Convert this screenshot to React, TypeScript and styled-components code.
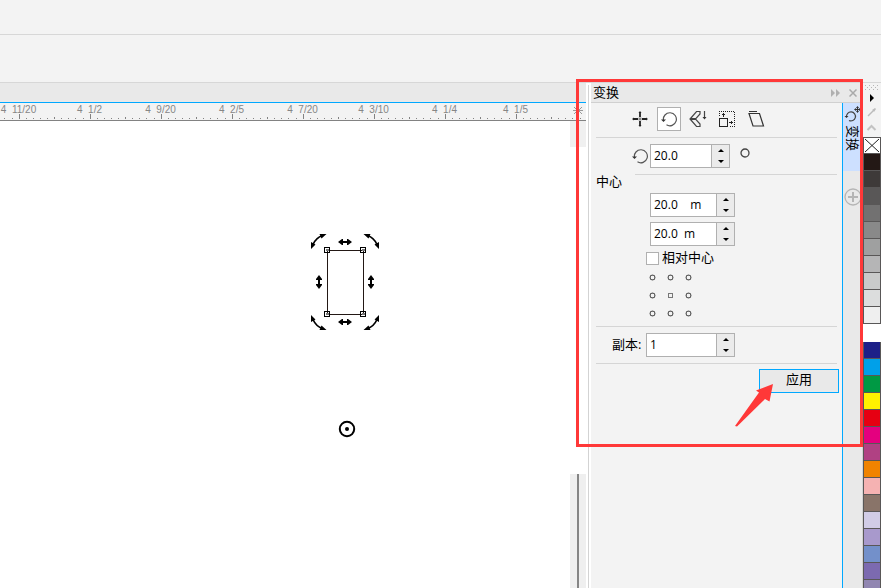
import React, { useState } from "react";
import styled, { createGlobalStyle } from "styled-components";

const Global = createGlobalStyle`
  * { box-sizing: border-box; }
  body {
    margin: 0;
    background: #fff;
    color: #000;
    font: 12px/16px "Open Sans", "Noto Sans CJK SC", sans-serif;
  }
  button, input { font: inherit; color: inherit; margin: 0; }
`;

const Shell = styled.div`
  position: relative;
  display: flex;
  flex-direction: column;
  height: 100vh;
  overflow: hidden;
`;

const TopBar = styled.header<{ $height: number }>`
  flex: none;
  height: ${(p) => p.$height}px;
  background: #f3f3f3;
  border-bottom: 1px solid #d7d7d7;
`;

const Workspace = styled.main`
  flex: 1;
  display: flex;
  min-height: 0;
`;

const Document = styled.section`
  flex: 1;
  min-width: 0;
  display: flex;
  flex-direction: column;
`;

const TabBand = styled.div`
  flex: none;
  height: 20px;
  background: #e9e9e9;
  border-bottom: 1px solid #00a8ff;
`;

const Ruler = styled.div`
  position: relative;
  flex: none;
  display: flex;
  height: 18px;
  background: #f3f3f3;
  border-bottom: 1px solid #828282;
  overflow: hidden;
`;

const RulerCell = styled.div`
  flex: none;
  width: 71px;
  display: flex;
  flex-direction: column;
  align-items: center;
  color: #868686;
  font: 10px/14px "Liberation Sans", Arial, sans-serif;
  white-space: pre;

  &:first-child { margin-left: -17px; }
  span { height: 11px; }
  svg { flex: none; display: block; margin-top: -1px; }
`;

const RulerEnd = styled.svg`
  position: absolute;
  right: 2px;
  top: 2px;
`;

const Canvas = styled.div`
  position: relative;
  flex: 1;
  min-height: 0;
  display: flex;
  justify-content: flex-end;
  background: #fff;
`;

const Drawing = styled.svg`
  position: absolute;
  left: 300px;
  top: 104px;
`;

const ScrollColumn = styled.div`
  width: 16px;
  display: flex;
  flex-direction: column;
  justify-content: flex-start;
`;

const ScrollTop = styled.div`
  height: 26px;
  background: #f0f0f0;
  margin-bottom: 327px;
`;

const ScrollTrack = styled.div`
  flex: 1;
  display: flex;
  justify-content: center;
  background: #efefef;
  &::before { content: ""; width: 2px; background: #858585; }
`;

const Splitter = styled.div`
  flex: none;
  width: 5px;
  display: flex;
  justify-content: center;
  padding-top: 2px;
  background: #fff;
  &::before { content: ""; width: 1px; background: #d3d3d3; }
`;

const Docker = styled.aside`
  flex: none;
  width: 272px;
  display: flex;
  flex-direction: column;
`;

const DockerHeader = styled.div`
  flex: none;
  height: 20px;
  display: flex;
  align-items: center;
  padding: 0 2px;
  background: #e9e9e9;
  border-bottom: 1px solid #d0d0d0;
`;

const DockerTitle = styled.h2`
  flex: 1;
  margin: 0;
  padding-bottom: 2px;
  font-size: 13px;
  line-height: 16px;
  font-weight: 400;
`;

const PlainButton = styled.button`
  display: flex;
  align-items: center;
  justify-content: center;
  padding: 0;
  border: 0;
  background: none;
`;

const HeaderButton = styled(PlainButton)`
  width: 17px;
  height: 17px;
`;

const DockerBody = styled.div`
  flex: 1;
  display: flex;
  min-height: 0;
`;

const Form = styled.form`
  flex: 1;
  min-width: 0;
  display: flex;
  flex-direction: column;
  padding: 0 5px;
  background: #f3f3f3;
  border-right: 1px solid #00a8ff;
`;

const ModeBar = styled.div`
  display: flex;
  align-items: center;
  gap: 5px;
  height: 34px;
  padding: 0 0 2px 32px;
`;

const ModeButton = styled(PlainButton)<{ $active?: boolean }>`
  width: 24px;
  height: 24px;
  border: 1px solid ${(p) => (p.$active ? "#b0b0b0" : "transparent")};
  background: ${(p) => (p.$active ? "#fff" : "none")};
`;

const Rule = styled.hr<{ $indent?: boolean }>`
  flex: none;
  width: auto;
  height: 1px;
  margin: 0 0 0 ${(p) => (p.$indent ? 39 : 0)}px;
  border: 0;
  background: #d5d5d5;
`;

const Row = styled.div<{ $indent: number; $height: number }>`
  flex: none;
  display: flex;
  align-items: center;
  height: ${(p) => p.$height}px;
  padding-left: ${(p) => p.$indent}px;
`;

const RowIcon = styled.span`
  flex: none;
  display: flex;
  margin-right: 1px;
`;

const Origin = styled(PlainButton)`
  width: 12px;
  height: 12px;
  margin: 0 0 6px 9px;
`;

const SpinBox = styled.div<{ $width: number }>`
  display: flex;
  width: ${(p) => p.$width}px;
  height: 24px;
  border: 1px solid #b0b0b0;
  background: #fff;

  input {
    flex: 1;
    min-width: 0;
    padding: 0 3px;
    border: 0;
    outline: 0;
    background: none;
  }
`;

const SpinButtons = styled.div`
  width: 18px;
  display: flex;
  flex-direction: column;
  border-left: 1px solid #b0b0b0;
  background: #ebebeb;
  button { flex: 1; }
`;

const Group = styled.fieldset`
  min-width: 0;
  margin: 0;
  padding: 0;
  border: 0;
`;

const GroupTitle = styled.legend`
  float: left;
  padding: 0;
  width: 100%;
  height: 15px;
  font-size: 13px;
  line-height: 12px;
`;

const CheckLabel = styled.label`
  display: flex;
  align-items: center;
  gap: 3px;
  font-size: 13px;

  input {
    appearance: none;
    width: 13px;
    height: 13px;
    border: 1px solid #b0b0b0;
    background: #fff;
  }
  input:checked { background: #00a8ff; }
  span { padding-bottom: 2px; }
`;

const AnchorGrid = styled.div`
  display: grid;
  grid-template-columns: repeat(3, 18px);
  grid-auto-rows: 18px;
  padding: 0 0 4px 47px;
`;

const CopiesLabel = styled.label`
  width: 34px;
  padding-bottom: 2px;
  font-size: 13px;
`;

const Apply = styled.button`
  align-self: flex-end;
  flex: none;
  width: 80px;
  height: 24px;
  margin: 5px -2px 0 0;
  padding: 0 0 4px;
  border: 1px solid #00a8ff;
  background: #e9e9e9;
  font-size: 13px;
  line-height: 18px;
`;

const TabStrip = styled.nav`
  flex: none;
  width: 20px;
  display: flex;
  flex-direction: column;
  gap: 17px;
  background: #e9e9e9;
  border-right: 1px solid #d3d3d3;
`;

const SideTab = styled(PlainButton)`
  flex-direction: column;
  justify-content: flex-start;
  height: 68px;
  padding-top: 2px;
  gap: 2px;
  background: #cde0ff;

  span {
    writing-mode: vertical-rl;
    text-orientation: sideways;
    font-size: 13px;
    line-height: 14px;
  }
`;

const Palette = styled.div`
  flex: none;
  width: 18px;
  display: flex;
  flex-direction: column;
  background: #f3f3f3;
`;

const PaletteTools = styled.div`
  flex: none;
  display: flex;
  flex-direction: column;
  align-items: center;
  height: 54px;
`;

const Swatch = styled.button<{ $color: string; $open?: boolean }>`
  flex: none;
  display: block;
  height: ${(p) => (p.$open ? 18 : 17)}px;
  padding: 0;
  border: solid ${(p) => (p.$open ? p.$color : "#595757")};
  border-width: 0 1px 1px;
  background: ${(p) => p.$color};
  svg { display: block; }
`;

const RedFrame = styled.div`
  position: absolute;
  top: 79px;
  right: 18px;
  width: 287px;
  height: 368px;
  border: 3px solid #ff3838;
  pointer-events: none;
`;

const RedArrow = styled.svg`
  position: absolute;
  top: 382px;
  right: 106px;
  pointer-events: none;
`;

const rulerLabels = ["4  11/20", "4  1/2", "4  9/20", "4  2/5", "4  7/20", "4  3/10", "4  1/4", "4  1/5", ""];

const swatches = [
  "#231815", "#3e3a39", "#595757", "#727171", "#898989", "#9fa0a0", "#b5b5b6",
  "#c9caca", "#dcdddd", "#efefef", "#ffffff", "#1d2088", "#00a0e9", "#009944",
  "#fff100", "#e60012", "#e4007f", "#b04183", "#f08300", "#f5b2b2", "#897469",
  "#d1cce6", "#a899cc", "#7390ca", "#7c6ab0", "#9186b1",
];

const RulerTicks = () => (
  <svg width="71" height="7" shapeRendering="crispEdges" aria-hidden="true">
    <path d="M36.5 1V6" stroke="#828282" />
    <path d="M0.5 4V6" stroke="#828282" />
    <path
      d="M7 5h1M14 5h1M21 5h1M29 5h1M43 5h1M50 5h1M57 5h1M64 5h1"
      stroke="#828282"
      transform="translate(0 .5)"
    />
  </svg>
);

const RotateIcon = () => (
  <svg width="18" height="16" viewBox="0 0 18 16" fill="none" aria-hidden="true">
    <path d="M3.500 9.500A6.500 6.500 0 1 1 6.500 13.800" stroke="#555" strokeWidth="1.200" />
    <path d="M1 8.500H6L3.500 11Z" fill="#333" />
  </svg>
);

const modes = [
  {
    name: "位置",
    icon: (
      <svg width="16" height="16" viewBox="0 0 16 16" aria-hidden="true">
        <path d="M8 1V6M8 10V15M1 8H6M10 8H15" stroke="#222" strokeWidth="1.800" />
        <path d="M6.500 2 8 0l1.500 2ZM6.500 14 8 16l1.500-2ZM2 6.500 0 8l2 1.500ZM14 6.500 16 8l-2 1.500Z" fill="#222" />
        <path d="M6.500 6.500h3v3h-3Z" fill="#888" />
      </svg>
    ),
  },
  { name: "旋转", icon: <RotateIcon /> },
  {
    name: "缩放和镜像",
    icon: (
      <svg width="18" height="18" viewBox="0 0 18 18" fill="none" stroke="#444" strokeWidth="1.200" aria-hidden="true">
        <path d="M7.500 1.500H11V4L7 8.500H1.500ZM1.500 9.500H7L11 14v2.500H7.500Z" />
        <path d="M15.500 1v7" />
        <path d="M13.500 7h4l-2 2.500Z" fill="#333" stroke="none" />
      </svg>
    ),
  },
  {
    name: "大小",
    icon: (
      <svg width="18" height="18" viewBox="0 0 18 18" fill="none" stroke="#222" shapeRendering="crispEdges" aria-hidden="true">
        <path d="M1.500 6V1.500H16.500V16.500H11" strokeDasharray="1 1" />
        <rect x="1.500" y="8.500" width="8" height="8" />
        <path d="M5.500 3v4M4 4.500h3M11 12.500h4M13.500 11v3" />
      </svg>
    ),
  },
  {
    name: "倾斜",
    icon: (
      <svg width="18" height="18" viewBox="0 0 18 18" fill="none" stroke="#333" strokeWidth="1.200" aria-hidden="true">
        <path d="M2 1.500h8M2 3.500h10.500l4 12.500H6Z" />
      </svg>
    ),
  },
];

function Spin({ id, label, value, width }: { id: string; label: string; value: string; width: number }) {
  return (
    <SpinBox $width={width}>
      <input id={id} aria-label={label} defaultValue={value} />
      <SpinButtons>
        <PlainButton type="button" aria-label="增加">
          <svg width="6" height="3"><path d="M0 3L3 0l3 3Z" /></svg>
        </PlainButton>
        <PlainButton type="button" aria-label="减少">
          <svg width="6" height="3"><path d="M0 0L3 3l3-3Z" /></svg>
        </PlainButton>
      </SpinButtons>
    </SpinBox>
  );
}

const CanvasDrawing = () => (
  <Drawing width="95" height="220" viewBox="300 225 95 220" aria-label="选定的矩形">
    <defs>
      <path id="stretch" d="M-7 0l4-3h1v2h4v-2h1l4 3-4 3H2V1h-4v2h-1Z" />
      <g id="turn">
        <path d="M313 244.500C315 240 318 237 322.500 235.500" fill="none" stroke="#000" strokeWidth="1.700" />
        <path d="M319.500 234h7l-5 4.500ZM311 242v7l4.500-4.500Z" />
      </g>
    </defs>
    <rect x="327.500" y="250.500" width="36" height="64" fill="none" stroke="#231815" />
    {[[324.5, 247.5], [360.5, 247.5], [324.5, 311.5], [360.5, 311.5]].map(([x, y]) => (
      <g key={`${x}-${y}`} fill="none" stroke="#000" shapeRendering="crispEdges">
        <rect x={x} y={y} width="5" height="5" />
        <path d={`M${x + 2} ${y + 3}h2v-1h-2Z`} strokeWidth="1" stroke="#777" />
      </g>
    ))}
    <use href="#stretch" transform="translate(345 242)" />
    <use href="#stretch" transform="translate(345 322)" />
    <use href="#stretch" transform="translate(319 282) rotate(90)" />
    <use href="#stretch" transform="translate(371 282) rotate(90)" />
    <use href="#turn" />
    <use href="#turn" transform="translate(690 0) scale(-1 1)" />
    <use href="#turn" transform="translate(0 564) scale(1 -1)" />
    <use href="#turn" transform="translate(690 564) scale(-1 -1)" />
    <circle cx="347" cy="429" r="7.200" fill="none" stroke="#000" strokeWidth="2" />
    <circle cx="347" cy="429" r="2" />
  </Drawing>
);

export default function App() {
  const [mode, setMode] = useState("旋转");

  return (
    <>
      <Global />
      <Shell>
        <TopBar $height={35} />
        <TopBar $height={48} />
        <Workspace>
          <Document>
            <TabBand />
            <Ruler>
              {rulerLabels.map((label, i) => (
                <RulerCell key={i}>
                  <span>{label}</span>
                  <RulerTicks />
                </RulerCell>
              ))}
              <RulerEnd width="12" height="11" stroke="#999" fill="none" aria-hidden="true">
                <path d="M1 5.500h10M6 1v3M6 7v2M2 2l3 3M10 2L7 5M2 9l3-3M10 9L7 6" />
              </RulerEnd>
            </Ruler>
            <Canvas>
              <CanvasDrawing />
              <ScrollColumn>
                <ScrollTop />
                <ScrollTrack />
              </ScrollColumn>
            </Canvas>
          </Document>
          <Splitter />
          <Docker>
            <DockerHeader>
              <DockerTitle>变换</DockerTitle>
              <HeaderButton type="button" aria-label="折叠">
                <svg width="9" height="8"><path d="M0 0l4 4-4 4ZM5 0l4 4-4 4Z" fill="#b0b0b0" /></svg>
              </HeaderButton>
              <HeaderButton type="button" aria-label="关闭">
                <svg width="8" height="8"><path d="M.5.5l7 7M7.500.5l-7 7" stroke="#aaa" strokeWidth="1.500" /></svg>
              </HeaderButton>
            </DockerHeader>
            <DockerBody>
              <Form onSubmit={(e) => e.preventDefault()}>
                <ModeBar>
                  {modes.map((m) => (
                    <ModeButton
                      key={m.name}
                      type="button"
                      aria-label={m.name}
                      $active={m.name === mode}
                      onClick={() => setMode(m.name)}
                    >
                      {m.icon}
                    </ModeButton>
                  ))}
                </ModeBar>
                <Rule />
                <Row $indent={35} $height={36}>
                  <RowIcon><RotateIcon /></RowIcon>
                  <Spin id="angle" label="旋转角度" value="20.0" width={80} />
                  <Origin type="button" aria-label="旋转中心">
                    <svg width="10" height="10"><circle cx="5" cy="5" r="4" fill="none" stroke="#444" strokeWidth="1.300" /></svg>
                  </Origin>
                </Row>
                <Rule $indent />
                <Group>
                  <GroupTitle>中心</GroupTitle>
                  <Row $indent={54} $height={29}>
                    <Spin id="center-x" label="中心 X" value="20.0    m" width={85} />
                  </Row>
                  <Row $indent={54} $height={29}>
                    <Spin id="center-y" label="中心 Y" value="20.0  m" width={85} />
                  </Row>
                  <Row $indent={50} $height={20}>
                    <CheckLabel>
                      <input type="checkbox" />
                      <span>相对中心</span>
                    </CheckLabel>
                  </Row>
                  <AnchorGrid>
                    {Array.from({ length: 9 }, (_, i) => (
                      <PlainButton key={i} type="button" aria-label={`锚点 ${i + 1}`}>
                        {i === 4 ? (
                          <svg width="7" height="7" fill="none" stroke="#777">
                            <rect x="1.500" y="1.500" width="4" height="4" />
                          </svg>
                        ) : (
                          <svg width="7" height="7" fill="none" stroke="#555">
                            <path d="M1.500 1.500h4v4h-4Z" stroke="#999" />
                            <circle cx="3.500" cy="3.500" r="2.500" />
                          </svg>
                        )}
                      </PlainButton>
                    ))}
                  </AnchorGrid>
                </Group>
                <Rule />
                <Row $indent={16} $height={36}>
                  <CopiesLabel htmlFor="copies">副本:</CopiesLabel>
                  <Spin id="copies" label="副本" value="1" width={89} />
                </Row>
                <Rule />
                <Apply type="submit">应用</Apply>
              </Form>
              <TabStrip>
                <SideTab type="button">
                  <svg width="18" height="18" viewBox="0 0 18 18" fill="none" aria-hidden="true">
                    <path d="M2.500 12A4.500 4.500 0 1 1 5 15.500" stroke="#444" strokeWidth="1.200" />
                    <path d="M.5 11h4l-2 2Z" fill="#333" />
                    <path d="M13.500 2v5M11 4.500h5" stroke="#333" strokeWidth="1.200" />
                    <path d="M12 3 13.500 1 15 3ZM12 6 13.500 8 15 6ZM12 3 10 4.500 12 6ZM15 3 17 4.500 15 6Z" fill="#333" />
                  </svg>
                  <span>变换</span>
                </SideTab>
                <PlainButton type="button" aria-label="添加">
                  <svg width="18" height="18" fill="none" stroke="#b5b5b5">
                    <circle cx="9" cy="9" r="8" strokeWidth="1.300" />
                    <path d="M9 4v10M4 9h10" strokeWidth="2" />
                  </svg>
                </PlainButton>
              </TabStrip>
            </DockerBody>
          </Docker>
          <Palette>
            <PaletteTools>
              <svg width="18" height="54" fill="none" aria-hidden="true">
                <path
                  d="M2 2.500h14M4 4.500h12M2 6.500h14"
                  stroke="#b5b5b5"
                  strokeDasharray="1 3"
                  shapeRendering="crispEdges"
                />
                <path d="M7 11v8l4-4Z" fill="#000" />
                <path d="M5 33l5-5" stroke="#bbb" strokeWidth="1.500" />
                <path d="M9 27l2 2 2-3-1-1Z" fill="#bbb" />
                <path d="M4.500 47l4-4 4 4" stroke="#c3c3c3" strokeWidth="2" />
              </svg>
            </PaletteTools>
            <Swatch type="button" aria-label="无填充" $color="#fff">
              <svg width="16" height="16" stroke="#222" fill="none">
                <path d="M0 .5h16" stroke="#595757" />
                <path d="M1 2l14 13M15 2L1 15" />
              </svg>
            </Swatch>
            {swatches.map((color) => (
              <Swatch key={color} type="button" aria-label={color} $color={color} $open={color === "#ffffff"} />
            ))}
          </Palette>
        </Workspace>
        <RedFrame />
        <RedArrow width="40" height="46" viewBox="735 382 40 46" aria-hidden="true">
          <path d="M773 384 756 390.500 759 392.500 735 426 737 426.500 765 399 769.500 401.500Z" fill="#ff3838" />
        </RedArrow>
      </Shell>
    </>
  );
}
